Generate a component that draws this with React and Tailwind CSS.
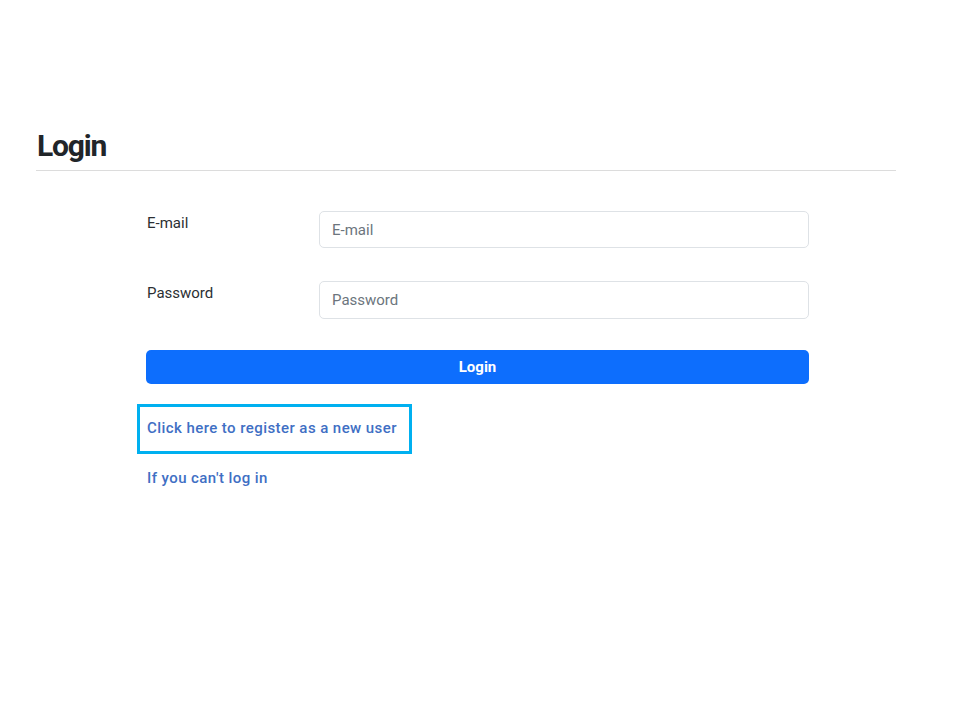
import React from 'react'

const font = { fontFamily: 'Roboto, "Liberation Sans", sans-serif' }

export default function App() {
  return (
    <div className="min-h-[720px] w-[960px] bg-white pt-[126px] pl-[36px]" style={font}>
      <div className="w-[860px]">
        {/* Header */}
        <h1 className="pl-px text-[30px] font-bold leading-[40px] tracking-[-1.2px] text-[#212529] pb-[4px] border-b border-[#dcdcdc]">
          Login
        </h1>

        {/* Form */}
        <div className="ml-[111px] mt-[40px] w-[662px]">
          <div className="flex">
            <label className="w-[172px] pt-[2px] text-[15px] leading-[20px] text-[#2b2f33]">E-mail</label>
            <input
              className="h-[37px] flex-1 rounded-[5px] border border-[#dee2e6] px-[12px] text-[15px] text-[#212529] placeholder:text-[#6c757d] outline-none"
              placeholder="E-mail"
            />
          </div>
          <div className="mt-[33px] flex">
            <label className="w-[172px] pt-[2px] text-[15px] leading-[20px] text-[#2b2f33]">Password</label>
            <input
              type="password"
              className="h-[38px] flex-1 rounded-[5px] border border-[#dee2e6] px-[12px] text-[15px] text-[#212529] placeholder:text-[#6c757d] outline-none"
              placeholder="Password"
            />
          </div>
          <button className="-ml-px w-[663px] mt-[31px] h-[34px] rounded-[5px] bg-[#0d6efd] text-[15px] font-bold text-white">
            Login
          </button>

          <div className="mt-[20px] -ml-[10px] w-[275px] border-[3px] border-[#00b0f0] pt-[9px] pb-[11px] pl-[7px]">
            <a className="text-[15px] font-medium leading-[19px] text-[#3f6fc4] tracking-[0.43px]" href="#">
              Click here to register as a new user
            </a>
          </div>
          <div className="mt-[12px]">
            <a className="text-[15px] font-medium leading-[19px] text-[#3f6fc4] tracking-[0.43px]" href="#">
              If you can't log in
            </a>
          </div>
        </div>
      </div>
    </div>
  )
}
